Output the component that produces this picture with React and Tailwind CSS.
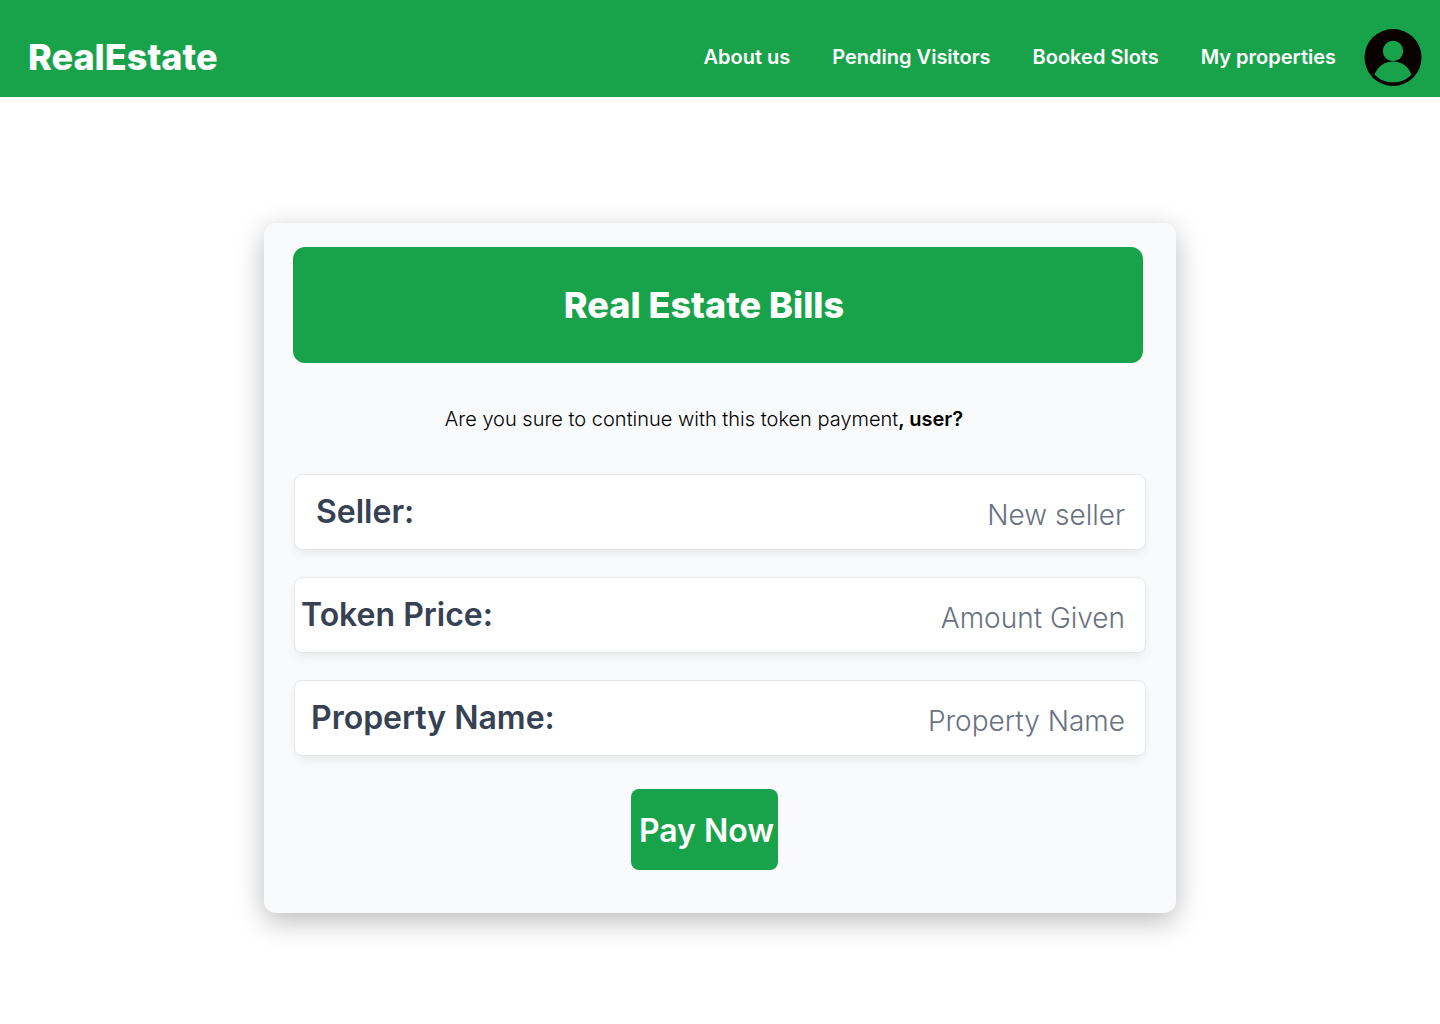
const nav = ['About us', 'Pending Visitors', 'Booked Slots', 'My properties'];

function Avatar() {
  return (
    <svg viewBox="0 0 58 58" className="size-[58px]" aria-hidden="true">
      <circle cx="29" cy="28.5" r="28.5" fill="#0a0000" />
      <circle cx="29" cy="22" r="10.2" fill="#18a34b" />
      <path d="M10.5 45.5C14 37.5 20 32.500 29 32.500S44 37.500 47.500 45.500C43 50.500 37 53.300 29 53.300S15 50.500 10.500 45.500Z" fill="#18a34b" />
    </svg>
  );
}

function Field({ id, label, value, pad }) {
  return (
    <div className={`flex h-[76px] items-center rounded-lg border border-gray-200 bg-white pr-5 shadow-[0_5px_12px_-3px_rgba(0,0,0,0.09)] ${pad}`}>
      <label htmlFor={id} className="shrink-0 text-[32px] leading-10 font-semibold text-gray-700">{label}</label>
      <input id={id} placeholder={value} className="h-full min-w-0 flex-1 bg-transparent pt-1.5 text-right text-[28px] font-light text-gray-500 outline-none placeholder:text-gray-500" />
    </div>
  );
}

export default function App() {
  return (
    <div className="min-h-screen bg-white font-['Inter',sans-serif]">
      <header className="flex h-[97px] items-center justify-between bg-[#18a34b] pt-4 pr-[18px] pl-7 text-white">
        <a href="#" className="text-4xl font-extrabold">RealEstate</a>
        <div className="flex items-center gap-7">
          <nav className="flex gap-[42px] text-xl font-semibold">
            {nav.map((n) => <a key={n} href="#">{n}</a>)}
          </nav>
          <button type="button" aria-label="Profile" className="pt-0.5"><Avatar /></button>
        </div>
      </header>
      <main className="px-6 pt-[126px] pb-24">
        <form className="mx-auto flex max-w-[912px] flex-col rounded-xl bg-gray-50 px-[30px] pt-6 pb-[43px] shadow-[0_8px_28px_rgba(0,0,0,0.27)]">
          <h1 className="mr-[3px] -ml-px rounded-xl bg-[#18a34b] py-[38px] pr-7 text-center text-4xl font-extrabold text-white">Real Estate Bills</h1>
          <p className="mt-[42px] pr-8 text-center text-xl font-light text-black">
            Are you sure to continue with this token payment<span className="font-semibold">, user?</span>
          </p>
          <div className="mt-[41px] flex flex-col gap-[27px]">
            <Field id="seller" label="Seller:" value="New seller" pad="pl-[21px]" />
            <Field id="price" label="Token Price:" value="Amount Given" pad="pl-1.5" />
            <Field id="property" label="Property Name:" value="Property Name" pad="pl-4" />
          </div>
          <div className="mt-[33px] flex justify-center pr-[31px]">
            <button type="button" className="h-[81px] rounded-lg bg-[#18a34b] pt-0.5 pr-1 pl-2 text-[32px] font-semibold text-white">Pay Now</button>
          </div>
        </form>
      </main>
    </div>
  );
}
